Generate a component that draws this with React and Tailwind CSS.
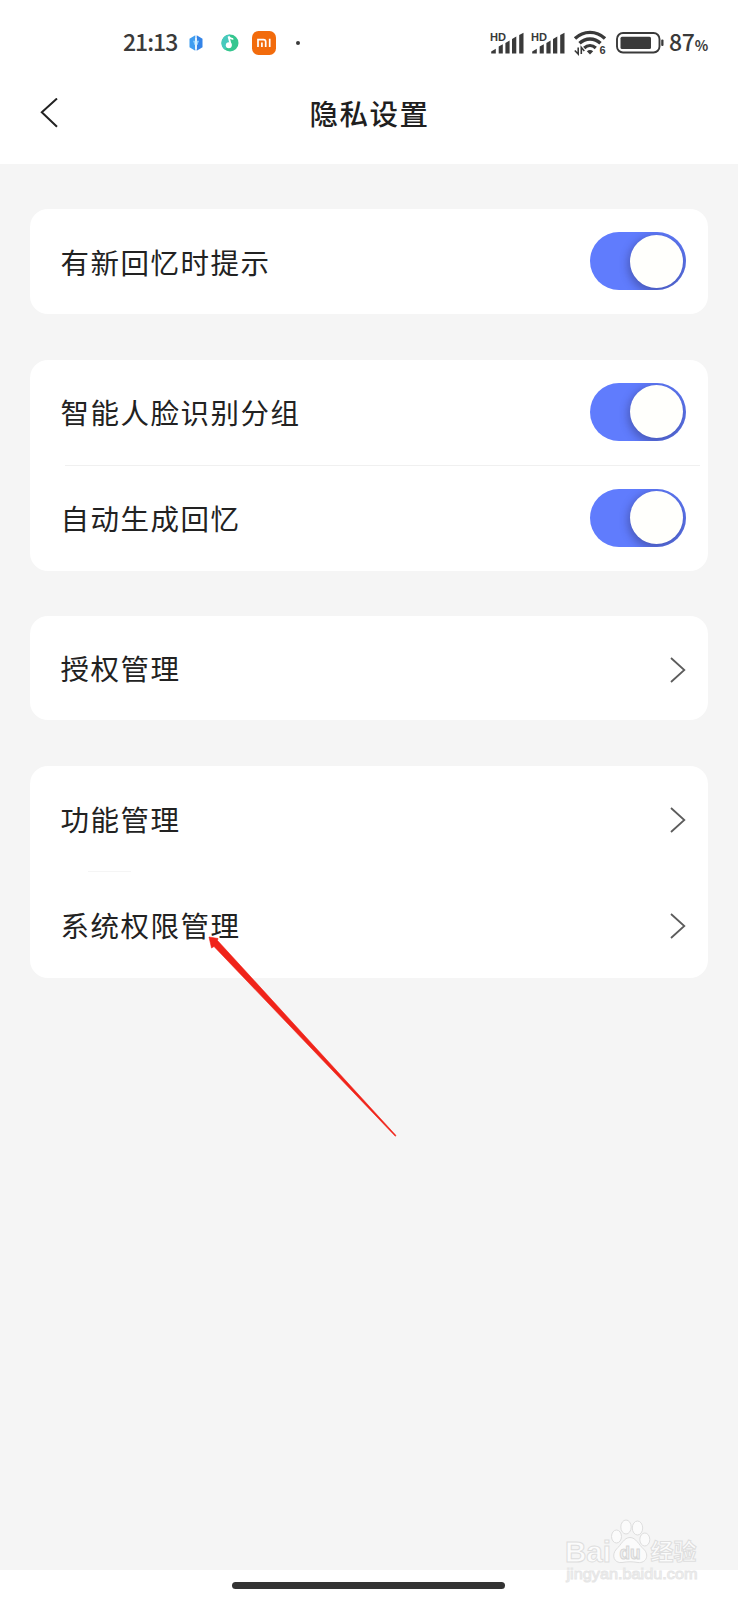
import React from 'react'

const GROUPS = [
  { height: 'h-[105px]', rows: [{ label: '有新回忆时提示', type: 'switch' }] },
  {
    height: 'h-[211px]',
    divider: 'ml-[35px] mr-2 bg-[#f0f0f0]',
    rows: [
      { label: '智能人脸识别分组', type: 'switch' },
      { label: '自动生成回忆', type: 'switch' },
    ],
  },
  { height: 'h-[104px]', rows: [{ label: '授权管理', type: 'link' }] },
  {
    height: 'h-[212px]',
    divider: 'ml-[58px] w-[43px] bg-[#f5f5f5]',
    rows: [
      { label: '功能管理', type: 'link' },
      { label: '系统权限管理', type: 'link' },
    ],
  },
]

function Signal() {
  return (
    <svg width="35" height="28" viewBox="0 -2 35 28" fill="#3a3a3a" className="font-['Liberation_Sans',sans-serif]">
      <text x="0" y="9.500" fontSize="10.500" fontWeight="700" textLength="16" lengthAdjust="spacingAndGlyphs">HD</text>
      <path d="M1.200 22.500v-2l4.600-2.700v4.700zM8.700 22.500v-7l4.100-2.200v9.200zM15.400 22.500V12l4.200-2.400v12.900zM22 22.500V8l4.300-2.400v16.900zM29.200 22.500V4l4.300-2.200v20.700z" />
    </svg>
  )
}

function Wifi() {
  return (
    <svg width="34" height="28" viewBox="0 -2 34 28" fill="none" stroke="#3a3a3a" className="font-['Liberation_Sans',sans-serif]">
      <path d="M2 7.500C10.500-.7 23.500-.7 32 7.500" strokeWidth="3.400" />
      <path d="M6.500 12.300C12.500 6.500 21.500 6.500 27.500 12.300" strokeWidth="3.400" />
      <path d="M11.200 17C14.700 13.800 19.300 13.800 22.800 17" strokeWidth="3.200" />
      <path d="M17 23.500l-3.200-3.300q3.200-2.600 6.400 0z" fill="#3a3a3a" stroke="none" />
      <path d="M1.800 19.500L5.200 23v-6.500M8.300 23v-6.500l3 3.500" strokeWidth="1.600" />
      <text x="26.500" y="23" fontSize="11" fontWeight="700" fill="#3a3a3a" stroke="none">6</text>
    </svg>
  )
}

function Battery() {
  return (
    <svg width="48" height="22" viewBox="0 0 48 22" fill="none">
      <rect x="1" y="1" width="42.500" height="19.500" rx="6" stroke="#3a3a3a" strokeWidth="1.900" />
      <rect x="4.500" y="4.700" width="30.500" height="12.200" rx="1.500" fill="#3a3a3a" />
      <rect x="45.200" y="7.500" width="2.300" height="6.500" rx="1" fill="#3a3a3a" />
    </svg>
  )
}

function StatusBar() {
  return (
    <div className="flex h-16 items-center pt-[22px] pr-[30px] pl-[123px] text-[#3a3a3a]">
      <span className="w-[55px] pb-[3px] text-[23px] leading-none font-medium tracking-[-1px]">21:13</span>
      <svg className="ml-[11px]" width="14" height="16" viewBox="0 0 14 16">
        <path d="M6.300.3v15.400L.5 12.200V3.800z" fill="#3f9df0" />
        <path d="M7.700.3l5.800 3.500v8.400l-5.800 3.500z" fill="#3384e8" />
        <path d="M4 5.800h6L8.500 10h-3z" fill="#8ed2ff" />
        <path d="M7 3v11" stroke="#fff" strokeWidth="1.200" />
      </svg>
      <svg className="ml-[18px]" width="18" height="18" viewBox="0 0 18 18">
        <circle cx="9" cy="9" r="8.500" fill="#35c68f" />
        <path d="M9 .5a8.500 8.500 0 0 0-5 15.300L9 9z" fill="#47c9bd" />
        <circle cx="7.800" cy="11.300" r="3" fill="#fff" />
        <path d="M9.800 11L7.500 2.500q2.500 2.800 4.800 2.300" fill="none" stroke="#fff" strokeWidth="1.800" />
      </svg>
      <svg className="ml-[13px]" width="24" height="24" viewBox="0 0 24 24">
        <rect width="24" height="24" rx="6.500" fill="#f26b0c" />
        <path d="M6 16V8.600h5.500q2.200 0 2.200 2.200V16M9.900 11.500V16M17.700 7.800V16" fill="none" stroke="#fff" strokeWidth="1.700" />
      </svg>
      <span className="ml-5 size-1 rounded-full bg-[#3a3a3a]" />

      <div className="ml-auto flex items-center">
        <Signal />
        <span className="w-1.5" />
        <Signal />
        <span className="w-[7px]" />
        <Wifi />
        <span className="w-[9px]" />
        <Battery />
        <span className="ml-[5px] flex w-[39px] items-baseline pb-[3px] leading-none font-medium whitespace-nowrap">
          <span className="text-[23px] leading-none tracking-[-0.3px]">87</span>
          <span className="text-[14px] leading-none font-bold tracking-[-1px]">%</span>
        </span>
      </div>
    </div>
  )
}

function Header() {
  return (
    <header className="grid h-[100px] grid-cols-[1fr_auto_1fr] items-center">
      <button className="pl-10">
        <svg width="18" height="32" viewBox="0 0 18 32" fill="none" stroke="#222" strokeWidth="2">
          <path d="M17 .5L1.800 14.200L17 28.700" />
        </svg>
      </button>
      <h1 className="pb-[2px] pl-px text-[28.500px] leading-none font-medium tracking-[1.500px] text-[#1f1f1f]">隐私设置</h1>
    </header>
  )
}

function Switch() {
  return (
    <button className="mb-px flex h-[58px] w-24 items-center justify-end overflow-hidden rounded-full bg-[#607cfd] pr-[3px]">
      <span className="size-[53px] rounded-full bg-[#fffffc] shadow-[0_3px_9px_2px_rgba(40,40,90,0.4)]" />
    </button>
  )
}

function Chevron() {
  return (
    <svg className="mt-[3px]" width="16" height="26" viewBox="0 0 16 26" fill="none" stroke="#5c5c5c" strokeWidth="1.800">
      <path d="M1 1L14.300 13L1 25" />
    </svg>
  )
}

function Row({ label, type }) {
  return (
    <div className="flex min-h-0 flex-1 items-center justify-between pr-[22px] pl-[30.500px]">
      <span className="pt-px text-[28.500px] leading-none tracking-[1.500px] text-[#222]">{label}</span>
      {type === 'switch' ? <Switch /> : <Chevron />}
    </div>
  )
}

function Group({ group }) {
  return (
    <section className={`flex flex-col rounded-[18px] bg-white ${group.height}`}>
      {group.rows.map((row, i) => (
        <React.Fragment key={row.label}>
          {i > 0 && <div className={`h-px ${group.divider}`} />}
          <Row {...row} />
        </React.Fragment>
      ))}
    </section>
  )
}

function Pointer() {
  return (
    <svg className="absolute top-[936px] left-[208px]" width="190" height="202" viewBox="0 0 190 202">
      <path d="M1 1L10 2.500L9.500 4.500L188 199.500L187.300 200.200L6 10.500L3.500 12z" fill="#f0241a" stroke="#f0241a" strokeWidth="0.600" />
    </svg>
  )
}

function Watermark() {
  return (
    <svg
      className="absolute top-[1516px] left-[560px] font-['Liberation_Sans','Noto_Sans_CJK_SC',sans-serif]"
      width="150"
      height="74"
      viewBox="0 0 150 74"
      fill="#fbfbfb"
      stroke="#dedede"
      strokeWidth="1"
    >
      <text x="5" y="45.500" fontSize="30" fontWeight="700" textLength="46" lengthAdjust="spacingAndGlyphs">Bai</text>
      <ellipse cx="56.500" cy="20.500" rx="5" ry="6.500" />
      <ellipse cx="66" cy="11" rx="5.200" ry="7" />
      <ellipse cx="77.500" cy="12" rx="5.200" ry="7" />
      <ellipse cx="84.800" cy="23.500" rx="5" ry="6.500" />
      <path d="M70 21.500C76 21.500 79 29 83.500 33C90 39 86 47.500 78 46.500C72 45.500 68 45.500 62 46.500C54 47.500 51 39 56.500 33C61 29 64 21.500 70 21.500z" />
      <text x="59.500" y="43" fontSize="19" fontWeight="700" textLength="21" lengthAdjust="spacingAndGlyphs" fill="#f0f0f0" stroke="#d6d6d6">du</text>
      <text x="90.500" y="44" fontSize="23" fontWeight="700" textLength="46" lengthAdjust="spacingAndGlyphs">经验</text>
      <text x="6.500" y="62.500" fontSize="15.500" textLength="131" lengthAdjust="spacingAndGlyphs" stroke="#e6e6e6">jingyan.baidu.com</text>
    </svg>
  )
}

export default function App() {
  return (
    <div className="relative flex h-[1600px] w-[738px] flex-col overflow-hidden bg-white font-['Noto_Sans_CJK_SC',sans-serif]">
      <StatusBar />
      <Header />
      <main className="flex flex-1 flex-col gap-[45.500px] bg-[#f5f5f5] px-[30px] pt-[45px]">
        {GROUPS.map((group) => (
          <Group key={group.rows[0].label} group={group} />
        ))}
      </main>
      <footer className="flex h-[30px] justify-center pt-3 pr-px">
        <span className="h-[7px] w-[273px] rounded-full bg-[#333]" />
      </footer>
      <Pointer />
      <Watermark />
    </div>
  )
}
